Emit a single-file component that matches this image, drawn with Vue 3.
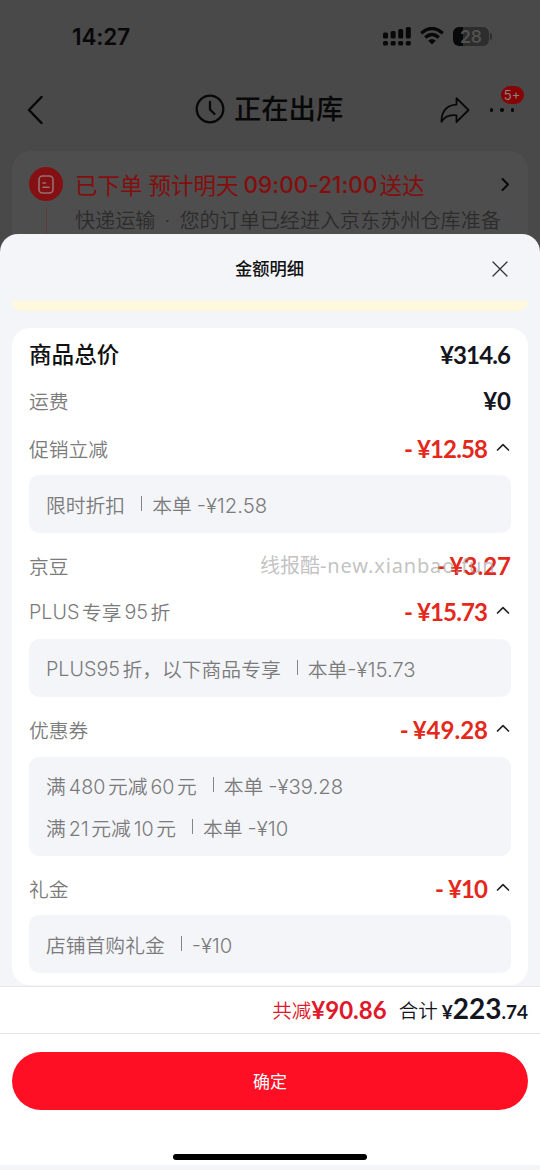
<script setup>
const groups = [
  { label: ['商品总价'], price: '¥314.6', kind: 'main' },
  { label: ['运费'], price: '¥0', kind: 'plain' },
  { label: ['促销立减'], price: '¥12.58', kind: 'off', open: true, details: [['限时折扣', '|', '本单', ' ', '-¥12.58']] },
  { label: ['京豆'], price: '¥3.27', kind: 'off' },
  { label: ['PLUS', '专享', '95', '折'], price: '¥15.73', kind: 'off', open: true, details: [['PLUS95', '折，以下商品专享', '|', '本单', '-¥15.73']] },
  {
    label: ['优惠券'], price: '¥49.28', kind: 'off', open: true,
    details: [
      ['满', '480', '元减', '60', '元', '|', '本单', ' ', '-¥39.28'],
      ['满', '21', '元减', '10', '元', '|', '本单', ' ', '-¥10'],
    ],
  },
  { label: ['礼金'], price: '¥10', kind: 'off', open: true, details: [['店铺首购礼金', '|', '-¥10']] },
]

function partClass(part) {
  if (part === '|') return 'bar'
  if (part === ' ') return 'space'
  if (part.startsWith('-')) return 'amount'
  return /^[A-Z0-9]+$/.test(part) ? 'latin' : 'han'
}

// Amounts with a narrow 1 are set tighter than the others.
const tight = (price) => price.includes('1')
</script>

<template>
  <div class="screen">
    <div class="order">
      <header class="status">
        <span class="clock">14:27</span>
        <div class="status-icons">
          <svg class="signal" width="28" height="19" viewBox="0 0 28 19">
            <rect x="0" y="5.5" width="5" height="6" rx="1.5" />
            <rect x="7.6" y="4" width="5" height="7.5" rx="1.5" />
            <rect x="15.2" y="2" width="5" height="9.5" rx="1.5" />
            <rect x="22.8" y="0" width="5" height="11.5" rx="1.5" />
            <rect x="0" y="14" width="5" height="4.6" rx="1.5" />
            <rect x="7.6" y="14" width="5" height="4.6" rx="1.5" />
            <rect x="15.2" y="14" width="5" height="4.6" rx="1.5" />
            <rect x="22.8" y="14" width="5" height="4.6" rx="1.5" />
          </svg>
          <svg class="wifi" width="24" height="18" viewBox="0 0 24 18">
            <path d="M1.2 6.3Q12-3.3 22.8 6.3" />
            <path d="M5.2 10.5Q12 4.5 18.8 10.5" />
            <path class="solid" d="M8.2 13.8Q12 10.4 15.8 13.8L12 17.5Z" />
          </svg>
          <div class="battery"><span>28</span></div>
          <i class="battery-cap"></i>
        </div>
      </header>
      <nav class="nav">
        <svg class="back" width="16" height="28" viewBox="0 0 16 28"><path d="M14.5 1L2 14L14.5 27" /></svg>
        <div class="nav-title">
          <svg width="30" height="30" viewBox="0 0 30 30"><circle cx="15" cy="15" r="13.3" /><path d="M15 8V15.5L19.5 20" /></svg>
          <h1>正在出库</h1>
        </div>
        <div class="nav-actions">
          <svg class="share" width="30" height="26" viewBox="0 0 30 26">
            <path d="M16.5 1.2L28.5 13L16.5 25V18.3C9.5 17.5 4.500 19.5 1.5 24.8C1.2 15 6.5 8 16.5 7.7Z" />
          </svg>
          <div class="more"><i></i><i></i><i></i><b class="badge">5+</b></div>
        </div>
      </nav>
      <section class="shipment">
        <div class="marker">
          <div class="disc">
            <svg width="16" height="19" viewBox="0 0 16 19"><rect x="1" y="1" width="14" height="17" rx="3.5" /><path d="M5 8H7.5M5 12.200H11" /></svg>
          </div>
          <i class="stem"></i>
        </div>
        <div class="shipment-text">
          <p class="eta"><span>已下单</span><span class="eta-day">预计明天</span><span class="eta-time">09:00-21:00</span><span>送达</span></p>
          <p class="route">快递运输<span class="dot">·</span>您的订单已经进入京东苏州仓库准备</p>
        </div>
        <svg class="go" width="9" height="13" viewBox="0 0 9 13"><path d="M1.5 1L7 6.5L1.5 12" /></svg>
      </section>
    </div>

    <main class="sheet">
      <header class="sheet-head">
        <h2>金额明细</h2>
        <svg class="close" width="16" height="16" viewBox="0 0 16 16"><path d="M1 1L15 15M15 1L1 15" /></svg>
      </header>
      <div class="notice"></div>
      <section class="card">
        <template v-for="g in groups" :key="g.label.join('')">
          <div class="row" :class="g.kind">
            <span class="label"><span v-for="(p, i) in g.label" :key="i" :class="partClass(p)">{{ p }}</span></span>
            <span class="price"><span v-if="g.kind === 'off'" class="minus">-</span><span :class="{ tight: tight(g.price) }">{{ g.price }}</span></span>
            <svg v-if="g.open" class="fold" width="14" height="9" viewBox="0 0 14 9"><path d="M1.5 7L7 1.7L12.5 7" /></svg>
          </div>
          <div v-if="g.details" class="box">
            <p v-for="(line, n) in g.details" :key="n">
              <span v-for="(p, i) in line" :key="i" :class="partClass(p)">{{ p === '|' ? '' : p }}</span>
            </p>
          </div>
        </template>
        <span class="watermark">线报酷<span class="site">-new.xianbao.fun</span></span>
      </section>

      <div class="totals">
        <span class="saved">共减</span><span class="saved-sum">¥90.86</span>
        <span class="total">合计</span><span class="total-sum"><small class="yen">¥</small>223<small>.74</small></span>
      </div>
      <div class="confirm-area">
        <button class="confirm">确定</button>
        <i class="home"></i>
      </div>
    </main>
  </div>
</template>

<style>
html, body { margin: 0; background: #f4f5f9; }
</style>

<style scoped>
* { box-sizing: border-box; }
h1, h2, p { margin: 0; }
i, small { font-style: normal; }
svg { display: block; flex: none; fill: none; stroke-linecap: round; stroke-linejoin: round; }

.screen {
  width: 540px;
  height: 1170px;
  overflow: hidden;
  font-family: Inter, "Noto Sans CJK SC", sans-serif;
}

.order { height: 254px; background: #494949; overflow: hidden; color: #080808; }
.status { display: flex; justify-content: space-between; height: 72px; padding: 0 48px 0 72px; align-items: center; }
.clock { font-size: 22.5px; font-weight: 600; letter-spacing: -0.1px; }
.status-icons { display: flex; align-items: center; }
.signal { fill: #080808; }
.wifi { margin-left: 9px; stroke: #080808; stroke-width: 3.4; stroke-linecap: butt; }
.wifi .solid { fill: #080808; stroke: none; }
.battery {
  width: 36px; height: 19px; margin-left: 9px; border-radius: 6px;
  background: linear-gradient(90deg, #080808 28%, #2d2d2d 28%);
  color: #525252; font-size: 17.5px; font-weight: 600; line-height: 19px; text-align: center;
}
.battery-cap { width: 2px; height: 7px; margin-left: 1px; border-radius: 0 2px 2px 0; background: #2d2d2d; }

.nav { display: flex; align-items: center; height: 76px; padding: 0 26px 0 27px; }
.back { stroke: #080808; stroke-width: 2.5; }
.nav-title { display: flex; align-items: center; gap: 9px; margin-left: 152px; margin-top: -2px; }
.nav-title svg { stroke: #080808; stroke-width: 2.3; }
.nav-title h1 { padding-top: 2px; font-size: 27.3px; font-weight: 500; line-height: 36px; }
.nav-actions { display: flex; align-items: center; margin-left: auto; }
.share { stroke: #080808; stroke-width: 1.8; }
.more { position: relative; display: flex; gap: 7px; margin-left: 20px; }
.more i { width: 3.5px; height: 3.5px; border-radius: 50%; background: #080808; }
.badge {
  position: absolute; left: 11px; top: -22px; width: 23px; height: 18px; border-radius: 9px;
  background: #870406; color: #8d8383; font-size: 13px; font-weight: 400; line-height: 18px; text-align: center;
}

.shipment {
  display: flex; height: 130px; margin: 3px 12px 0; padding: 16px 18px 0 17px;
  border-radius: 18px; background: #4e4e4e;
}
.marker { display: flex; flex-direction: column; align-items: center; }
.disc { display: flex; align-items: center; justify-content: center; width: 34px; height: 34px; border-radius: 50%; background: #851013; }
.disc svg { stroke: #927171; stroke-width: 1.6; }
.stem { width: 1px; height: 60px; margin-top: 7px; background: #633; opacity: .7; }
.shipment-text { margin-left: 12px; white-space: nowrap; }
.eta { display: flex; height: 33px; align-items: center; color: #850d0d; font-size: 22.5px; font-weight: 400; }
.eta-day { margin-left: 6px; }
.eta-time { margin: 1px 2px 0 5px; font-weight: 500; letter-spacing: 0.05px; }
.route { margin-top: 7px; color: #2c2c2c; font-size: 20.1px; font-weight: 350; line-height: 28px; }
.dot { display: inline-block; width: 24px; text-align: center; }
.go { margin: 11px 0 0 auto; stroke: #080808; stroke-width: 2; }

.sheet { display: flex; flex-direction: column; position: relative; height: 936px; margin-top: -20px; border-radius: 18px 18px 0 0; background: #f4f5f9; }
.sheet-head { display: grid; grid-template-columns: 60px 1fr 60px; align-items: center; height: 67px; }
.sheet-head h2 { grid-column: 2; margin-left: -1px; text-align: center; font-size: 17.3px; font-weight: 500; color: #111; }
.close { margin-left: 11.5px; margin-top: 2px; stroke: #333; stroke-width: 1.3; }
.notice { height: 10px; margin: 0 12px; border-radius: 0 0 9px 9px; background: #fef8dd; }

.card { position: relative; height: 657px; margin: 17px 12px 1px; padding: 13px 17px 0; border-radius: 18px; background: #fff; }
.row { display: flex; align-items: center; height: 28px; margin-top: 18px; }
.row:first-child { margin-top: 0; }
.row.plain + .row { margin-top: 20px; }
.box + .row { margin-top: 19px; }
.row + .box { margin-top: 13px; }
.row.plain + .row + .box { margin-top: 12px; }
.row + .box:nth-last-child(2) { margin-top: 12px; }
.label, .box p { display: flex; align-items: center; color: #7b7b7b; font-size: 19.8px; font-weight: 350; white-space: nowrap; }
.label { margin-top: -2px; }
.main .label { margin-top: -4px; color: #111; font-size: 22.6px; font-weight: 500; }
.latin + .han { margin-left: 2.5px; }
.han + .latin { margin-left: 3px; }
.latin { padding-top: 2px; font-size: 19.7px; }
.price { margin: -1px 0 0 auto; color: #14151f; font: 700 24px Lato, "Noto Sans CJK SC", sans-serif; line-height: 28px; }
.off .price { color: #e4281c; }
.main .price { margin-top: 0; }
.tight { letter-spacing: -0.85px; margin-right: 0.85px; }
.minus { margin-right: 4px; }
.fold { margin: -3px 1px 0 8px; stroke: #222; stroke-width: 1.7; }
.box { display: flex; flex-direction: column; justify-content: center; gap: 13px; min-height: 58px; padding: 14px 17px; border-radius: 10px; background: #f4f5f9; }
.box p { height: 29px; }
.bar { width: 1px; height: 15px; margin: -2px 10px 0 16px; background: #858585; }
.space { width: 5px; }
.amount { padding-top: 2px; font-size: 20.3px; }
.watermark { position: absolute; left: 248px; top: 223px; color: rgba(160, 160, 160, .65); font: 400 20px "Noto Sans", "Noto Sans CJK SC", sans-serif; line-height: 30px; white-space: nowrap; }
.site { letter-spacing: 0.85px; }

.totals { display: flex; align-items: center; justify-content: flex-end; height: 48px; padding-right: 12px; border-top: 1px solid #e6e6ea; border-bottom: 1px solid #e4e4e6; background: #fff; font-size: 19.5px; font-weight: 350; }
.saved, .total { margin-top: -2px; }
.saved, .saved-sum { color: #e0182a; }
.saved-sum, .total-sum { font-family: Lato, sans-serif; font-weight: 700; font-size: 24px; }
.saved-sum { margin-top: -1px; }
.total { margin-left: 12px; color: #14151f; }
.total-sum { margin-left: 4px; color: #14151f; font-size: 28px; line-height: 40px; }
.total-sum small { font-size: 19px; }
.confirm-area { display: flex; flex-direction: column; align-items: center; height: 131px; padding: 18px 12px 0; background: #fff; }
.confirm { width: 516px; height: 58px; padding: 0 0 2px; border: 0; border-radius: 29px; background: #ff0f23; color: #fff; font: 400 17px Inter, "Noto Sans CJK SC", sans-serif; }
.home { width: 194px; height: 6px; margin-top: 44px; border-radius: 3px; background: #000; }
</style>
